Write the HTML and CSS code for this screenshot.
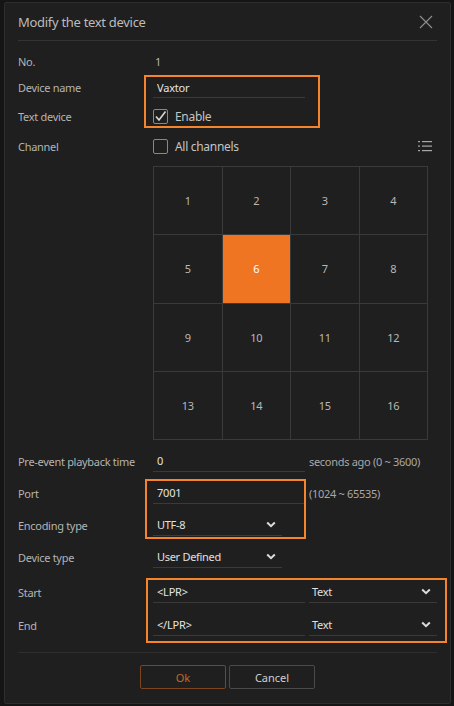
FILE: index.html
```
<!DOCTYPE html>
<html lang="en">
<head>
    <meta charset="UTF-8">
    <meta name="viewport" content="width=device-width, initial-scale=1.0">
    <title>Modify the text device</title>
    <link rel="stylesheet" href="styles.css">
</head>
<body>
    <div class="dialog">
        <div class="dialog-header">
            <span class="dialog-title">Modify the text device</span>
            <svg class="close-icon" width="14" height="14" viewBox="0 0 14 14">
                <path d="M1 1 L13 13 M13 1 L1 13" stroke="#8c8c8c" stroke-width="1.2" fill="none"/>
            </svg>
        </div>

        <div class="dialog-body">
            <div class="row row-no">
                <label>No.</label>
                <span class="value">1</span>
            </div>
            <div class="row row-name">
                <label>Device name</label>
                <div class="field"><input type="text" value="Vaxtor"></div>
            </div>
            <div class="row row-text">
                <label>Text device</label>
                <div class="check checked">
                    <span class="box">
                        <svg width="13" height="13" viewBox="0 0 13 13"><path d="M2 6.5 L5 10 L11.5 1.5" stroke="#d8d8d8" stroke-width="1.6" fill="none"/></svg>
                    </span>
                    <span>Enable</span>
                </div>
            </div>
            <div class="row row-channel">
                <label>Channel</label>
                <div class="check">
                    <span class="box"></span>
                    <span>All channels</span>
                </div>
                <svg class="list-icon" width="14" height="12" viewBox="0 0 14 12">
                    <g fill="#a8a8a8">
                        <rect x="0" y="1" width="2" height="1.2"/>
                        <rect x="4" y="1" width="10" height="1.2"/>
                        <rect x="0" y="5.5" width="2" height="1.2"/>
                        <rect x="4" y="5.5" width="10" height="1.2"/>
                        <rect x="0" y="10" width="2" height="1.2"/>
                        <rect x="4" y="10" width="10" height="1.2"/>
                    </g>
                </svg>
            </div>

            <div class="channel-grid">
                <div class="cell">1</div>
                <div class="cell">2</div>
                <div class="cell">3</div>
                <div class="cell">4</div>
                <div class="cell">5</div>
                <div class="cell active">6</div>
                <div class="cell">7</div>
                <div class="cell">8</div>
                <div class="cell">9</div>
                <div class="cell">10</div>
                <div class="cell">11</div>
                <div class="cell">12</div>
                <div class="cell">13</div>
                <div class="cell">14</div>
                <div class="cell">15</div>
                <div class="cell">16</div>
            </div>

            <div class="row row-wide">
                <label>Pre-event playback time</label>
                <div class="field"><input type="text" value="0"></div>
                <span class="hint">seconds ago (0 ~ 3600)</span>
            </div>
            <div class="row row-wide">
                <label>Port</label>
                <div class="field"><input type="text" value="7001"></div>
                <span class="hint">(1024 ~ 65535)</span>
            </div>
            <div class="row row-wide">
                <label>Encoding type</label>
                <div class="select">
                    <span>UTF-8</span>
                    <svg width="10" height="7" viewBox="0 0 10 7"><path d="M1.2 1.5 L5 5.2 L8.8 1.5" stroke="#dcdcdc" stroke-width="2" fill="none"/></svg>
                </div>
            </div>
            <div class="row row-wide">
                <label>Device type</label>
                <div class="select">
                    <span>User Defined</span>
                    <svg width="10" height="7" viewBox="0 0 10 7"><path d="M1.2 1.5 L5 5.2 L8.8 1.5" stroke="#dcdcdc" stroke-width="2" fill="none"/></svg>
                </div>
            </div>
            <div class="row row-wide row-start">
                <label>Start</label>
                <div class="field"><input type="text" value="&lt;LPR&gt;"></div>
                <div class="select select-long">
                    <span>Text</span>
                    <svg width="10" height="7" viewBox="0 0 10 7"><path d="M1.2 1.5 L5 5.2 L8.8 1.5" stroke="#dcdcdc" stroke-width="2" fill="none"/></svg>
                </div>
            </div>
            <div class="row row-wide row-end">
                <label>End</label>
                <div class="field"><input type="text" value="&lt;/LPR&gt;"></div>
                <div class="select select-long">
                    <span>Text</span>
                    <svg width="10" height="7" viewBox="0 0 10 7"><path d="M1.2 1.5 L5 5.2 L8.8 1.5" stroke="#dcdcdc" stroke-width="2" fill="none"/></svg>
                </div>
            </div>
        </div>

        <div class="dialog-footer">
            <button class="btn btn-ok">Ok</button>
            <button class="btn">Cancel</button>
        </div>

        <!-- highlight frames -->
        <div class="mark mark-name"></div>
        <div class="mark mark-port"></div>
        <div class="mark mark-tags"></div>
    </div>
</body>
</html>
```

FILE: styles.css
```
body {
    margin: 0;
    background-color: #151515;
    font-family: 'Noto Sans', 'Open Sans', sans-serif;
    font-size: 11px;
    letter-spacing: -0.3px;
    color: #b4b4b4;
}

.dialog {
    position: relative;
    width: 445px;
    height: 700px;
    margin: 2px 0 0 4px;
    background-color: #1f1f1f;
    border: 1px solid #2e2e2e;
    border-radius: 2px;
}

.dialog-header {
    display: flex;
    align-items: center;
    justify-content: space-between;
    height: 37px;
    margin: 0 13px 0 13px;
    border-bottom: 1px solid #333;
}

.dialog-title {
    font-size: 13px;
    color: #bcbcbc;
}

.close-icon {
    margin-right: 4px;
}

.dialog-body {
    padding: 7px 0 0 13px;
}

.row {
    display: flex;
    align-items: center;
}

.row label {
    width: 135px;
    flex-shrink: 0;
}

.row-no { height: 26px; }
.row-name { height: 27px; }
.row-text { height: 30px; }
.row-channel { height: 30px; }
.row-wide { height: 32px; }
.row-start { margin-top: 3px; }
.row-end { margin-top: 1px; }

.value {
    padding-left: 2px;
}

.field {
    width: 152px;
    border-bottom: 1px solid #3a3a3a;
}

.field input {
    width: 100%;
    box-sizing: border-box;
    height: 20px;
    padding: 0 4px;
    background: transparent;
    border: none;
    outline: none;
    font-family: inherit;
    font-size: 11px;
    letter-spacing: -0.2px;
    color: #e4e4e4;
}

.hint {
    margin-left: 4px;
    color: #a8a8a8;
}

.check {
    display: flex;
    align-items: center;
    gap: 7px;
    font-size: 12px;
    color: #c4c4c4;
}

.check .box {
    display: flex;
    align-items: center;
    justify-content: center;
    width: 13px;
    height: 13px;
    border: 1px solid #888;
    border-radius: 2px;
}

.list-icon {
    margin-left: auto;
    margin-right: 18px;
}

.channel-grid {
    display: grid;
    grid-template-columns: repeat(4, 1fr);
    grid-template-rows: repeat(4, 1fr);
    gap: 1px;
    width: 273px;
    height: 272px;
    margin: 5px 0 5px 135px;
    padding: 1px;
    background-color: #3a3a3a;
}

.cell {
    display: flex;
    align-items: center;
    justify-content: center;
    background-color: #1f1f1f;
    color: #b8b8b8;
    font-size: 11px;
}

.cell.active {
    background-color: #f07522;
    color: #fff;
}

.select {
    display: flex;
    align-items: center;
    justify-content: space-between;
    box-sizing: border-box;
    width: 129px;
    height: 21px;
    padding: 0 6px 0 4px;
    border-bottom: 1px solid #3a3a3a;
    color: #e0e0e0;
}

.select-long {
    width: 128px;
    margin-left: 4px;
    padding-left: 3px;
}

.dialog-footer {
    display: flex;
    justify-content: center;
    gap: 3px;
    margin: 11px 13px 0 13px;
    padding-top: 12px;
    border-top: 1px solid #2f2f2f;
}

.btn {
    width: 86px;
    height: 24px;
    background-color: #1f1f1f;
    border: 1px solid #4a4a4a;
    border-radius: 2px;
    font-family: inherit;
    font-size: 11px;
    color: #d0d0d0;
}

.btn-ok {
    border-color: #7d4420;
    color: #c9652a;
}

.mark {
    position: absolute;
    border: 2px solid #f5842c;
}

.mark-name {
    left: 139px;
    top: 72px;
    width: 172px;
    height: 49px;
}

.mark-port {
    left: 140px;
    top: 476px;
    width: 157px;
    height: 56px;
}

.mark-tags {
    left: 141px;
    top: 575px;
    width: 297px;
    height: 61px;
}
```
